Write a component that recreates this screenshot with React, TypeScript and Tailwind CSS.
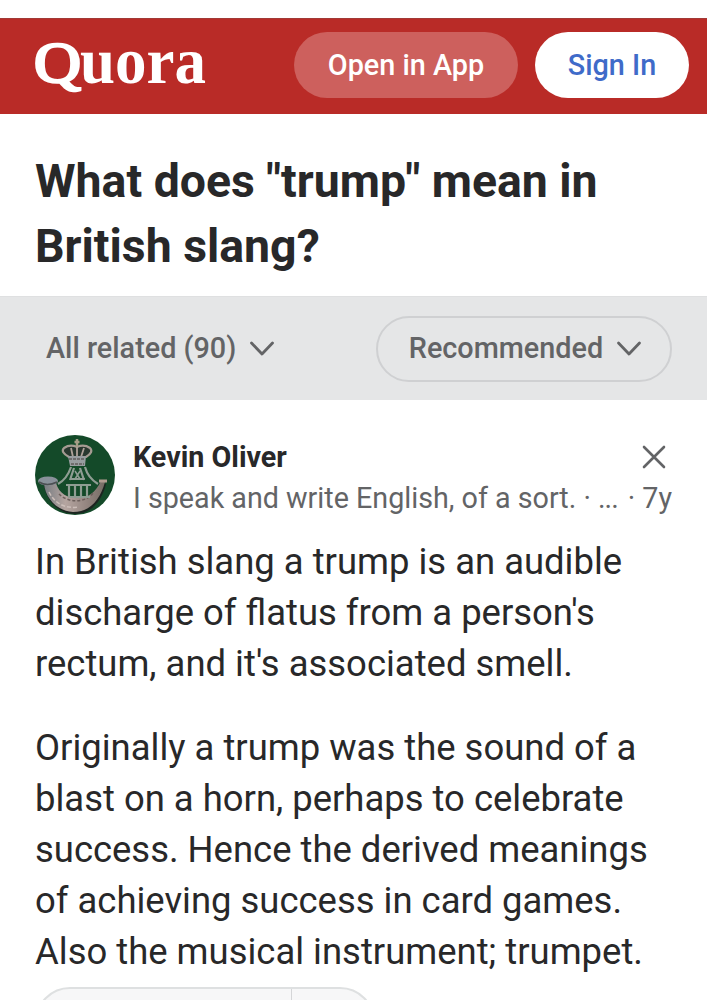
import type { ReactNode } from 'react';

const title = 'What does "trump" mean in British slang?';

const answer = [
    [
        'In British slang a trump is an audible',
        "discharge of flatus from a person's",
        "rectum, and it's associated smell.",
    ],
    [
        'Originally a trump was the sound of a',
        'blast on a horn, perhaps to celebrate',
        'success. Hence the derived meanings',
        'of achieving success in card games.',
        'Also the musical instrument; trumpet.',
    ],
];

function Logo() {
    return (
        <svg width="190" height="92" viewBox="0 0 190 92" className="block overflow-visible" fill="#fff">
            <g fontFamily="'Liberation Serif', serif">
                <text x="4" y="63" fontSize="56" textLength="47" lengthAdjust="spacingAndGlyphs" stroke="#fff" strokeWidth="2.6">Q</text>
                <text x="50" y="64" fontSize="66" fontWeight="700" textLength="126" lengthAdjust="spacingAndGlyphs">uora</text>
            </g>
        </svg>
    );
}

function Chevron() {
    return (
        <svg width="26" height="18" viewBox="0 0 26 18" fill="none" stroke="#636466" strokeWidth="2.8" strokeLinecap="round" strokeLinejoin="round">
            <path d="M2.5 3 13 14 23.5 3" />
        </svg>
    );
}

function Avatar() {
    return (
        <svg width="80" height="80" viewBox="0 0 80 80" className="block shrink-0">
            <defs>
                <clipPath id="round"><circle cx="40" cy="40" r="40" /></clipPath>
                <linearGradient id="horn" x1="0" y1="0" x2="1" y2="0">
                    <stop offset="0" stopColor="#777c82" />
                    <stop offset="0.35" stopColor="#b5a5a0" />
                    <stop offset="0.7" stopColor="#948580" />
                    <stop offset="1" stopColor="#756c64" />
                </linearGradient>
            </defs>
            <g clipPath="url(#round)">
                <rect width="80" height="80" fill="#144a29" />
                {/* bugle */}
                <path d="M9 50C11 66 24 79 40 79 56 79 67 66 71 49L66 47C62 58 56 65 45 65 34 65 24 60 21 49Z" fill="#1c2420" />
                <path d="M9 48C10 63 22 76 38 77 55 77 65 65 70 47L66 46C60 58 53 63 43 63 33 63 24 59 21 48Z" fill="url(#horn)" />
                <path d="M14 57C20 69 31 74 43 72" fill="none" stroke="#cdbfba" strokeWidth="1.5" strokeDasharray="4 2" />
                <path d="M24 59C32 67 49 70 59 57" fill="none" stroke="#6c5f5b" strokeWidth="1.5" strokeDasharray="3 2" />
                <ellipse cx="13" cy="46" rx="10" ry="4.5" fill="#89919a" />
                <path d="M4 47Q12 52 22 47" fill="none" stroke="#4c5053" strokeWidth="1.5" />
                <path d="M64 46H72" stroke="#b19c91" strokeWidth="3" />
                {/* cords */}
                <g fill="none" stroke="#8f9d93" strokeWidth="2.2">
                    <path d="M36 32Q32 44 23 49M50 32Q53 43 63 49M39 33 35 45M45 33 49 45M35 44H50M31 50H56M33 62H55" />
                    <path d="M34 50V62M40 50V62M46 50V62M52 50V62" />
                    <path d="M40 36 45 44M45 36 40 44" strokeWidth="1.5" />
                </g>
                {/* crown */}
                <path d="M34 22Q25 17 29 13 35 9 42 12 49 9 55 13 59 17 51 22Z" fill="#29382f" stroke="#a59b92" strokeWidth="2.2" />
                <path d="M42 12V22M36 13 38 22M49 13 46 22" stroke="#b0a29a" strokeWidth="1.8" />
                <path d="M33 21H51L50 31H35Z" fill="#989da0" />
                <path d="M34 24H50M36 29H49" stroke="#615e5c" strokeWidth="1.3" strokeDasharray="3 1" />
                <path d="M42 4V12M39.5 7H44.5" stroke="#a59d86" strokeWidth="2.5" />
            </g>
        </svg>
    );
}

function Line({ children }: { children: ReactNode }) {
    return <span className="block whitespace-nowrap">{children}</span>;
}

export default function App() {
    return (
        <div className="flex h-[1000px] w-[707px] flex-col overflow-hidden bg-white font-['Roboto',sans-serif] text-[#282829]">
            <header className="mt-[18px] flex h-24 shrink-0 items-center border-t border-[#a23a36] bg-[#b92b27] pr-[18px] pb-[3px] pl-[30px]">
                <Logo />
                <div className="ml-auto flex gap-[17px] text-[28.8px] font-medium">
                    <button className="h-[66px] w-[224px] rounded-full bg-[#cd605d] pt-0.5 text-white">Open in App</button>
                    <button className="h-[66px] w-[154px] rounded-full bg-white pt-0.5 text-[#3f6bc9]">Sign In</button>
                </div>
            </header>

            <h1 className="h-[182px] w-[640px] shrink-0 pt-[35px] pl-[35px] text-[46.4px] leading-[65px] font-bold">{title}</h1>

            <div className="flex h-[104px] shrink-0 items-center justify-between border-t border-[#dfe0e1] bg-[#e5e6e7] pr-[35px] pl-[46px] text-[28.8px] font-medium text-[#636466]">
                <button className="flex items-center gap-[13px]">All related (90) <Chevron /></button>
                <button className="flex h-[66px] w-[296px] items-center justify-center gap-[13px] rounded-full border-2 border-[#cfd0d2] pl-[3px]">
                    Recommended <Chevron />
                </button>
            </div>

            <main className="flex flex-col px-[35px] pt-[35px]">
                <div className="flex h-20 gap-[18px]">
                    <Avatar />
                    <div className="min-w-0 flex-1 pt-0.5 text-[28.7px] leading-[41px]">
                        <div className="flex h-[41px] items-center justify-between pr-[5px]">
                            <span className="font-bold">Kevin Oliver</span>
                            <svg width="26" height="26" viewBox="0 0 26 26" stroke="#636466" strokeWidth="2.6" strokeLinecap="round">
                                <path d="M3 2 23 22M23 2 3 22" />
                            </svg>
                        </div>
                        <div className="flex justify-between whitespace-nowrap text-[#636466]">
                            <span>I speak and write English, of a sort. · <span className="tracking-[-1px]">...</span></span>
                            <span>· 7y</span>
                        </div>
                    </div>
                </div>

                <div className="mt-[21px] flex flex-col gap-[33px] text-[36.45px] leading-[51px]">
                    {answer.map((lines, i) => (
                        <p key={i}>
                            {lines.map((line) => <Line key={line}>{line}</Line>)}
                        </p>
                    ))}
                </div>

                {/* vote buttons */}
                <div className="mt-[10px] flex h-[70px] w-[340px] shrink-0 rounded-full border-2 border-[#dee0e1] bg-[#f7f7f8]">
                    <div className="w-[255px] border-r border-[#d5d6d8]" />
                </div>
            </main>
        </div>
    );
}
